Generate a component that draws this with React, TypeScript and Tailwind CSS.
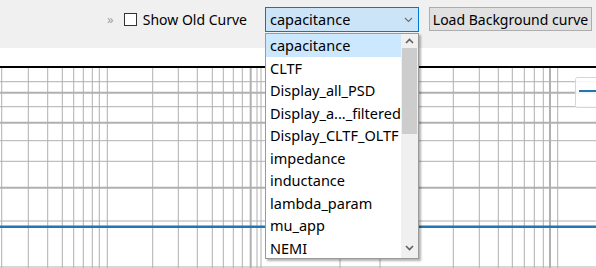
import React from "react";

const items = [
  "capacitance",
  "CLTF",
  "Display_all_PSD",
  "Display_a..._filtered",
  "Display_CLTF_OLTF",
  "impedance",
  "inductance",
  "lambda_param",
  "mu_app",
  "NEMI",
];

// measured grid positions (page coords)
const vLines: [number, number][] = [
  [1.7, 1], [28.3, 1], [47.7, 1], [62.3, 1], [73.7, 1], [83.3, 1], [92.3, 1], [99.3, 1], [107.3, 1],
  [152.7, 1], [178.3, 1], [197.3, 1], [212.3, 1], [223.3, 1], [233.3, 1], [242.3, 1], [250.7, 2],
  [257, 1], [261, 1], [340, 1], [380, 1],
  [453.3, 1], [479.3, 1], [498.3, 1], [512.3, 1], [524.3, 1], [534.3, 1], [543.3, 1], [550, 2], [557.7, 1],
];
const hLines: [number, number][] = [
  [81.7, 1], [92.7, 2], [106.7, 1], [122.7, 2], [140.7, 1], [161.3, 1], [187.7, 2], [221, 1], [267, 1],
];

function Chart() {
  return (
    <svg width="596" height="220" viewBox="0 48 596 220" className="block">
      <rect x="0" y="48" width="596" height="220" fill="#ffffff" />
      {hLines.map(([y, w]) => (
        <line key={"h" + y} x1="0" x2="596" y1={y} y2={y} stroke="#b0b0b0" strokeWidth={w} />
      ))}
      {vLines.map(([x, w]) => (
        <line key={"v" + x} x1={x} x2={x} y1="68" y2="268" stroke="#b0b0b0" strokeWidth={w} />
      ))}
      <line x1="0" x2="596" y1="67" y2="67" stroke="#000" strokeWidth="2" />
      <line x1="0" x2="596" y1="226.8" y2="226.8" stroke="#1f77b4" strokeWidth="2.6" />
      <rect x="575.5" y="77.5" width="30" height="30" rx="2" fill="#fff" fillOpacity="0.85" stroke="#d6d6d6" />
      <line x1="579" x2="596" y1="91" y2="91" stroke="#1f77b4" strokeWidth="2" />
    </svg>
  );
}

function Dropdown() {
  return (
    <div className="absolute left-0 top-[26px] w-[154px] h-[226px] bg-white border border-[#9a9a9a] shadow-[2px_2px_2px_rgba(0,0,0,0.3)] flex">
      <div className="flex-1 flex flex-col">
        {items.map((it, i) => (
          <div
            key={it}
            className={
              "h-[22.5px] leading-[22.5px] pl-[4px] text-[14.5px] text-black whitespace-nowrap " +
              (i === 0 ? "bg-[#cce8ff]" : "")
            }
          >
            {it}
          </div>
        ))}
      </div>
      <div className="w-[17px] bg-[#f0f0f0] flex flex-col items-center">
        <div className="h-[14px] flex items-center justify-center">
          <svg width="9" height="6" viewBox="0 0 9 6">
            <path d="M1 5 L4.5 1.5 L8 5" fill="none" stroke="#606060" strokeWidth="1.6" />
          </svg>
        </div>
        <div className="w-[15px] h-[86px] bg-[#cdcdcd]" />
        <div className="flex-1" />
        <div className="h-[20px] flex items-center justify-center">
          <svg width="9" height="6" viewBox="0 0 9 6">
            <path d="M1 1 L4.5 4.5 L8 1" fill="none" stroke="#606060" strokeWidth="1.6" />
          </svg>
        </div>
      </div>
    </div>
  );
}

export default function App() {
  return (
    <div className="w-[596px] h-[268px] overflow-hidden bg-white font-['Noto_Sans',sans-serif] text-black relative">
      <div className="h-[48px] bg-[#f0f0f0] flex items-start justify-end pr-[4px] pt-[7px]">
        <div className="flex items-center h-[25px] mr-[18px]">
          <span className="text-[#a0a0a0] text-[13px] mr-[10px]">»</span>
          <div className="w-[13px] h-[13px] border border-[#333] bg-white mr-[6px]" />
          <span className="text-[14px] whitespace-nowrap">Show Old Curve</span>
        </div>
        <div className="relative mr-[10px]">
          <div className="w-[154px] h-[25px] bg-[#cce4f7] border border-[#0078d7] flex items-center justify-between pl-[4px] pr-[5px]">
            <span className="text-[14.5px]">capacitance</span>
            <svg width="9" height="6" viewBox="0 0 9 6">
              <path d="M1 1 L4.5 4.5 L8 1" fill="none" stroke="#707070" strokeWidth="1.2" />
            </svg>
          </div>
          <Dropdown />
        </div>
        <button className="w-[163px] h-[24px] bg-[#e1e1e1] border border-[#adadad] text-[14px] whitespace-nowrap flex items-center justify-center">
          Load Background curve
        </button>
      </div>
      <Chart />
    </div>
  );
}
